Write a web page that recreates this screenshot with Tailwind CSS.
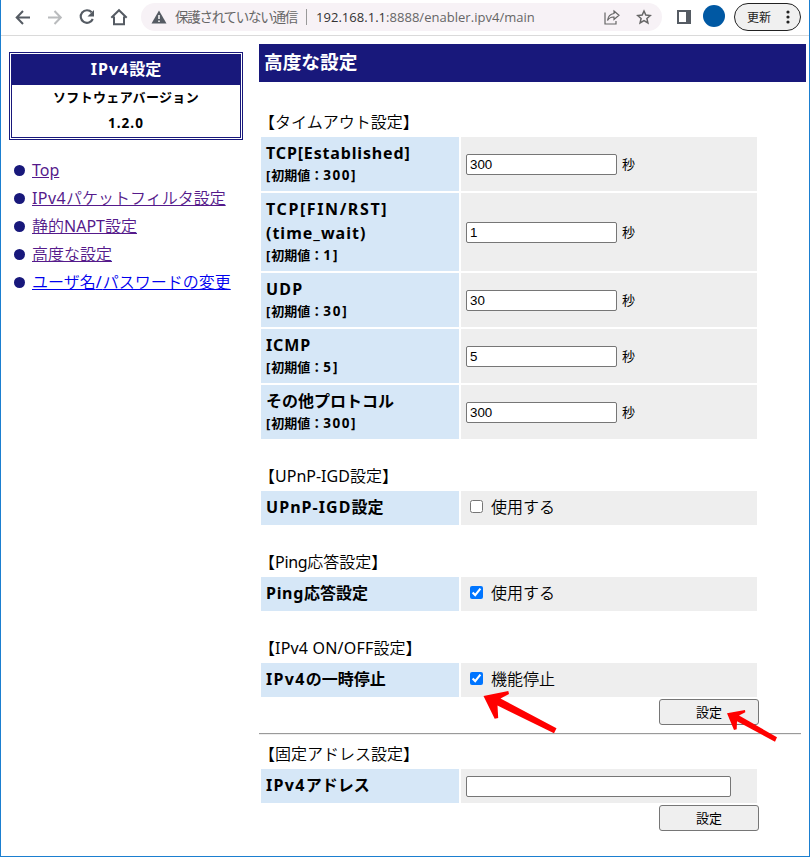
<!DOCTYPE html>
<html lang="ja">
<head>
<meta charset="utf-8">
<title>高度な設定</title>
<script src="https://cdn.jsdelivr.net/npm/@tailwindcss/browser@4"></script>
</head>
<body class="bg-white">
<div class="relative flex h-[857px] w-[810px] flex-col border-x border-b border-[#1b7fd0] bg-white font-['Noto_Sans','Noto_Sans_CJK_JP',sans-serif] text-[16px] leading-[24px] text-black">
  <!-- browser toolbar -->
  <header class="flex h-9 shrink-0 items-start border-b border-[#dadada] pl-3 pt-[3px]">
    <div class="flex h-7 items-center gap-3 text-[#555b63]">
      <svg class="size-5" viewBox="0 0 20 20" fill="none" stroke="currentColor" stroke-width="2"><path d="M17 10.500H4M10 4l-6.300 6.500 6.300 6.500"/></svg>
      <svg class="size-5 text-[#babcbe]" viewBox="0 0 20 20" fill="none" stroke="currentColor" stroke-width="2"><path d="M3 10.500h12.500M9.500 4l6.300 6.500-6.300 6.500"/></svg>
      <svg class="size-5" viewBox="0 0 20 20" fill="none" stroke="currentColor" stroke-width="2.1"><path d="M14.7 5.300A6.300 6.300 0 1 0 15.800 12"/><path d="M17 3v6.500h-6.500z" fill="currentColor" stroke="none"/></svg>
      <svg class="size-5" viewBox="0 0 20 20" fill="none" stroke="currentColor" stroke-width="2"><path d="M2.300 10.700 10 3.200l7.700 7.500M5 9.500v7.700h10V9.500"/></svg>
    </div>
    <div class="ml-3 flex h-7 w-[521px] items-center rounded-full bg-[#f7f2f6] pl-[10px] text-[#666]">
      <svg class="h-4 w-4 shrink-0 text-[#555b63]" viewBox="0 0 16 16"><path d="M8 1.500 15.500 14.500H.500z" fill="currentColor"/><path d="M8 6v4M8 11.500v1.500" stroke="#fff" stroke-width="1.500"/></svg>
      <span class="ml-[8px] w-[131px] whitespace-nowrap text-[13.5px] tracking-[-1.25px]">保護されていない通信</span>
      <span class="h-4 w-px bg-[#999]"></span>
      <span class="ml-[9px] flex-1 whitespace-nowrap font-['Open_Sans',sans-serif] text-[13px] tracking-[0.03px]"><span class="text-[#333]">192.168.1.1</span>:8888/enabler.ipv4/main</span>
      <svg class="h-4 w-4" viewBox="0 0 16 16" fill="none" stroke="currentColor" stroke-width="1.2"><path d="M1 3.500v11.500h11v-3"/><path d="M10 2l5 4.300-5 4.200V8C7 7.800 5 9 3.500 11.500 4 7.500 6.500 4.900 10 4.500z"/></svg>
      <svg class="ml-4 mr-[10px] h-4 w-4" viewBox="0 0 16 16" fill="none" stroke="currentColor" stroke-width="1.500"><path d="m8 2 1.800 4.100 4.500.4-3.400 3 1 4.400L8 11.600l-3.900 2.300 1-4.400-3.400-3 4.500-.4z"/></svg>
    </div>
    <div class="ml-[15px] mt-[7px] h-[14px] w-[14px] border-2 border-r-[5px] border-[#555b63]"></div>
    <div class="ml-3 mt-[2px] size-[22px] rounded-full bg-[#0058a3]"></div>
    <div class="ml-[9px] flex h-7 w-[67px] items-center rounded-full border border-[#222] bg-[#f0f0f0] pl-3 text-[12px] text-[#222]">
      <span class="whitespace-nowrap pt-px">更新</span>
      <svg class="ml-[14px] h-4 w-[6px]" viewBox="0 0 6 16" fill="#222"><circle cx="3" cy="3" r="1.600"/><circle cx="3" cy="8" r="1.600"/><circle cx="3" cy="13" r="1.600"/></svg>
    </div>
  </header>

  <div class="flex flex-1">
    <nav class="w-[258px] pl-2 pt-4">
      <div class="h-[88px] w-[234px] border-[3px] border-double border-[#18187b] text-center font-bold">
        <div class="h-[30px] bg-[#18187b] leading-[29px] text-white"><span class="tracking-[1px]">IPv4</span>設定</div>
        <div class="h-[26px] text-[13px] font-semibold leading-[25px] tracking-[0.35px]">ソフトウェアバージョン</div>
        <div class="h-[26px] text-[13.5px] leading-[25px] tracking-[1px]">1.2.0</div>
      </div>
      <ul class="mt-4 pl-[5px] font-[350] leading-7 text-[#551a8b]">
        <li class="flex h-7 items-center gap-[7px]"><i class="mt-px size-[11px] rounded-full bg-[#18187b]"></i><a class="whitespace-nowrap font-normal underline">Top</a></li>
        <li class="flex h-7 items-center gap-[7px]"><i class="mt-px size-[11px] rounded-full bg-[#18187b]"></i><a class="whitespace-nowrap underline"><span class="font-normal tracking-[0.4px]">IPv4</span>パケットフィルタ設定</a></li>
        <li class="flex h-7 items-center gap-[7px]"><i class="mt-px size-[11px] rounded-full bg-[#18187b]"></i><a class="whitespace-nowrap underline">静的<span class="font-normal">NAPT</span>設定</a></li>
        <li class="flex h-7 items-center gap-[7px]"><i class="mt-px size-[11px] rounded-full bg-[#18187b]"></i><a class="whitespace-nowrap underline">高度な設定</a></li>
        <li class="flex h-7 items-center gap-[7px]"><i class="mt-px size-[11px] rounded-full bg-[#18187b]"></i><a class="whitespace-nowrap text-[#0000ee] underline">ユーザ名<span class="font-normal tracking-[1px]">/</span>パスワードの変更</a></li>
      </ul>
    </nav>

    <main class="w-[547px] pt-2">
      <h1 class="h-[38px] bg-[#18187b] pl-[5px] text-[18.7px] font-bold leading-[36px] text-white">高度な設定</h1>

      <h2 class="mt-7 h-[27px] font-[350]">【タイムアウト設定】</h2>
      <div class="ml-[2px] grid w-[496px] grid-cols-[198px_296px] gap-[2px]">
        <div class="h-[54px] bg-[#d6e7f7] px-[5px] pt-1 font-bold"><span class="tracking-[0.85px]">TCP[Established]</span><div class="-mt-px text-[13px] leading-[22px]"><span class="tracking-[1px]">[</span>初期値：<span class="text-[13.5px] tracking-[1.5px]">300]</span></div></div>
        <div class="flex items-center gap-[5px] bg-[#eee] pl-[5px] text-[13px]"><input class="h-[21px] w-[151px] rounded-[2px] border border-[#767676] bg-white px-[3px] pt-px font-['Liberation_Sans',sans-serif] text-[13.33px]" value="300"><span class="-mt-px">秒</span></div>
        <div class="h-[78px] bg-[#d6e7f7] px-[5px] pt-1 font-bold"><span class="tracking-[1.6px]">TCP[FIN/RST]</span><br><span class="tracking-[1px]">(time_wait)</span><div class="-mt-px text-[13px] leading-[22px]"><span class="tracking-[1px]">[</span>初期値：<span class="text-[13.5px] tracking-[2px]">1]</span></div></div>
        <div class="flex items-center gap-[5px] bg-[#eee] pl-[5px] text-[13px]"><input class="h-[21px] w-[151px] rounded-[2px] border border-[#767676] bg-white px-[3px] pt-px font-['Liberation_Sans',sans-serif] text-[13.33px]" value="1"><span class="-mt-px">秒</span></div>
        <div class="h-[54px] bg-[#d6e7f7] px-[5px] pt-1 font-bold"><span class="tracking-[1.2px]">UDP</span><div class="-mt-px text-[13px] leading-[22px]"><span class="tracking-[1px]">[</span>初期値：<span class="text-[13.5px] tracking-[1.800px]">30]</span></div></div>
        <div class="flex items-center gap-[5px] bg-[#eee] pl-[5px] text-[13px]"><input class="h-[21px] w-[151px] rounded-[2px] border border-[#767676] bg-white px-[3px] pt-px font-['Liberation_Sans',sans-serif] text-[13.33px]" value="30"><span class="-mt-px">秒</span></div>
        <div class="h-[54px] bg-[#d6e7f7] px-[5px] pt-1 font-bold"><span class="tracking-[0.9px]">ICMP</span><div class="-mt-px text-[13px] leading-[22px]"><span class="tracking-[1px]">[</span>初期値：<span class="text-[13.5px] tracking-[2px]">5]</span></div></div>
        <div class="flex items-center gap-[5px] bg-[#eee] pl-[5px] text-[13px]"><input class="h-[21px] w-[151px] rounded-[2px] border border-[#767676] bg-white px-[3px] pt-px font-['Liberation_Sans',sans-serif] text-[13.33px]" value="5"><span class="-mt-px">秒</span></div>
        <div class="h-[54px] bg-[#d6e7f7] px-[5px] pt-1 font-bold">その他プロトコル<div class="-mt-px text-[13px] leading-[22px]"><span class="tracking-[1px]">[</span>初期値：<span class="text-[13.5px] tracking-[1.5px]">300]</span></div></div>
        <div class="flex items-center gap-[5px] bg-[#eee] pl-[5px] text-[13px]"><input class="h-[21px] w-[151px] rounded-[2px] border border-[#767676] bg-white px-[3px] pt-px font-['Liberation_Sans',sans-serif] text-[13.33px]" value="300"><span class="-mt-px">秒</span></div>
      </div>

      <h2 class="mt-[25px] h-[27px] font-[350]">【<span class="font-normal">UPnP-IGD</span>設定】</h2>
      <div class="ml-[2px] grid h-[34px] w-[496px] grid-cols-[198px_296px] gap-[2px]">
        <div class="bg-[#d6e7f7] px-[5px] pt-1 font-bold"><span class="tracking-[1.05px]">UPnP-IGD</span>設定</div>
        <div class="flex items-start bg-[#eee] pl-[9px] pt-1 font-[350]"><input type="checkbox" class="mr-2 mt-[5px] size-[13px]">使用する</div>
      </div>

      <h2 class="mt-[25px] h-[27px] font-[350]">【<span class="font-normal tracking-[-0.300px]">Ping</span>応答設定】</h2>
      <div class="ml-[2px] grid h-[34px] w-[496px] grid-cols-[198px_296px] gap-[2px]">
        <div class="bg-[#d6e7f7] px-[5px] pt-1 font-bold"><span class="tracking-[0.7px]">Ping</span>応答設定</div>
        <div class="flex items-start bg-[#eee] pl-[9px] pt-1 font-[350]"><input type="checkbox" checked class="mr-2 mt-[5px] size-[13px]">使用する</div>
      </div>

      <h2 class="mt-[25px] h-[27px] font-[350]">【<span class="font-normal tracking-[0.200px]">IPv4 ON/OFF</span>設定】</h2>
      <div class="ml-[2px] grid h-[34px] w-[496px] grid-cols-[198px_296px] gap-[2px]">
        <div class="bg-[#d6e7f7] px-[5px] pt-1 font-bold"><span class="tracking-[1.3px]">IPv4</span>の一時停止</div>
        <div class="flex items-start bg-[#eee] pl-[9px] pt-1 font-[350]"><input type="checkbox" checked class="mr-2 mt-[5px] size-[13px]">機能停止</div>
      </div>
      <button class="ml-[400px] mt-[2px] block h-[26px] w-[100px] rounded-[3px] border border-[#767676] bg-[#efefef] pb-px text-[13px] leading-[22px]">設定</button>
      <hr class="mt-2 h-[2px] w-[542px] border-0 border-t border-[#9a9a9a] bg-[#eee]">

      <h2 class="mt-[7px] h-[27px] font-[350]">【固定アドレス設定】</h2>
      <div class="ml-[2px] grid h-[34px] w-[496px] grid-cols-[198px_296px] gap-[2px]">
        <div class="bg-[#d6e7f7] px-[5px] pt-1 font-bold"><span class="tracking-[1.3px]">IPv4</span>アドレス</div>
        <div class="flex items-center bg-[#eee] pl-[5px]"><input class="h-[21px] w-[265px] rounded-[2px] border border-[#767676] bg-white"></div>
      </div>
      <button class="ml-[400px] mt-[2px] block h-[26px] w-[100px] rounded-[3px] border border-[#767676] bg-[#efefef] pb-px text-[13px] leading-[22px]">設定</button>
    </main>
  </div>

  <!-- pointer arrows -->
  <svg class="pointer-events-none absolute left-[479px] top-[688px]" width="302" height="58" viewBox="480 688 302 58" fill="#ff0000">
    <path d="M483.500 696 508.300 691 509 694 500.500 698.500 556.500 728.300 554 733.300 497.500 705.500 498.200 718 494.700 718.700z"/>
    <path d="M727 713.300 745 710 745.300 712.300 739 715.500 777 737.300 775 741.700 737 721.300 736.700 729.300 734 730z"/>
  </svg>
</div>
</body>
</html>
